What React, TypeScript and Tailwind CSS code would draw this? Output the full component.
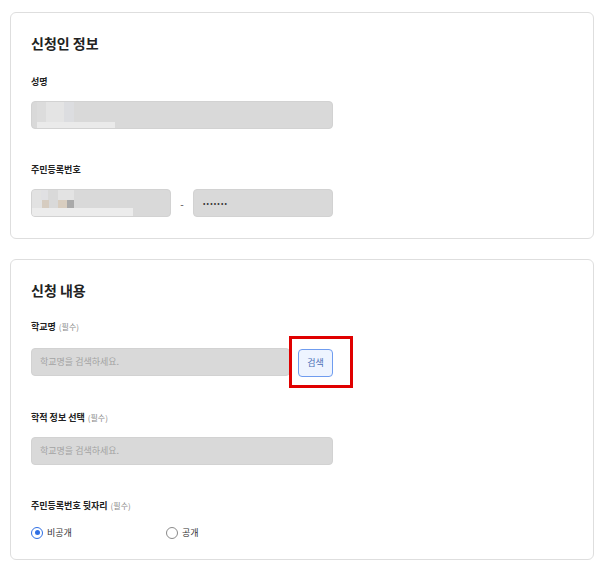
import React from "react";

const font = { fontFamily: '"Noto Sans CJK KR", "Noto Sans", sans-serif' };

const Label = ({ text, required }: { text: string; required?: boolean }) => (
  <div className="flex items-center h-[14px] leading-[14px]">
    <span className="text-[9px] font-bold text-[#222]">{text}</span>
    {required && (
      <span className="ml-[3px] text-[8px] text-[#8a8a8a]">(필수)</span>
    )}
  </div>
);

const Field = ({
  className,
  placeholder,
  children,
}: {
  className?: string;
  placeholder?: string;
  children?: React.ReactNode;
}) => (
  <div
    className={`relative h-[28px] rounded-[4px] bg-[#d9d9d9] border border-[#d2d2d2] flex items-center pl-[8px] overflow-hidden ${
      className ?? ""
    }`}
  >
    {placeholder && (
      <span className="text-[9px] text-[#a3a3a3]">{placeholder}</span>
    )}
    {children}
  </div>
);

const Radio = ({ label, checked }: { label: string; checked?: boolean }) => (
  <label className="flex items-center gap-[4px] h-[14px]">
    <span
      className={`w-[12px] h-[12px] rounded-full border flex items-center justify-center bg-white ${
        checked ? "border-[#2f6fe4]" : "border-[#8a8a8a]"
      }`}
    >
      {checked && <span className="w-[5px] h-[5px] rounded-full bg-[#2f6fe4]" />}
    </span>
    <span className="text-[9px] text-[#333]">{label}</span>
  </label>
);

const Card = ({ title, children, className }: { title: string; children: React.ReactNode; className?: string }) => (
  <section
    className={`w-[584px] rounded-[6px] border border-[#dedede] bg-white pl-[20px] pt-[21px] ${className ?? ""}`}
  >
    <h2 className="text-[14px] leading-[18px] font-bold text-[#222]">{title}</h2>
    {children}
  </section>
);

export default function App() {
  return (
    <div className="min-h-[566px] bg-white pl-[10px] pt-[12px]" style={font}>
      <Card title="신청인 정보" className="pb-[21px]">
        <div className="mt-[23px]">
          <Label text="성명" />
        </div>
        <Field className="mt-[12px] w-[302px]">
          <span className="absolute left-[5px] top-0 w-[9px] h-[20px] bg-[#dcdcdc]" />
          <span className="absolute left-[14px] top-0 w-[18px] h-[20px] bg-[#e4e4e4]" />
          <span className="absolute left-[32px] top-0 w-[10px] h-[20px] bg-[#dcdde0]" />
          <span className="absolute left-[5px] top-[20px] w-[78px] h-[8px] bg-[#eaeaea]" />
        </Field>

        <div className="mt-[34px]">
          <Label text="주민등록번호" />
        </div>
        <div className="mt-[12px] flex items-center w-[302px]">
          <Field className="w-[140px]">
            <span className="absolute left-0 top-0 w-[10px] h-[28px] bg-[#e2e2e2]" />
            <span className="absolute left-[9px] top-0 w-[7px] h-[10px] bg-[#e0e0e3]" />
            <span className="absolute left-[10px] top-[10px] w-[7px] h-[8px] bg-[#d6ccc0]" />
            <span className="absolute left-[26px] top-0 w-[16px] h-[10px] bg-[#e3e3e3]" />
            <span className="absolute left-[26px] top-[10px] w-[9px] h-[8px] bg-[#d8cdbf]" />
            <span className="absolute left-[35px] top-[10px] w-[7px] h-[8px] bg-[#a9a9a9]" />
            <span className="absolute left-0 top-[18px] w-[101px] h-[10px] bg-[#ececec]" />
          </Field>
          <span className="flex-1 text-center text-[10px] text-[#444]">-</span>
          <Field className="w-[140px] pl-[9px]">
            <span className="text-[7px] tracking-[1.2px] text-[#333]">•••••••</span>
          </Field>
        </div>
      </Card>

      <Card title="신청 내용" className="mt-[20px] pb-[19px]">
        <div className="mt-[21px]">
          <Label text="학교명" required />
        </div>
        <div className="mt-[13px] flex items-center gap-[8px]">
          <Field className="w-[259px]" placeholder="학교명을 검색하세요." />
          <div className="relative">
            <button className="w-[35px] h-[28px] rounded-[4px] border border-[#6f9cef] bg-[#eef4ff] text-[9px] text-[#4a6db5]">
              검색
            </button>
            <div className="absolute left-[-9px] top-[-11px] w-[64px] h-[52px] border-[3px] border-[#e00000]" />
          </div>
        </div>

        <div className="mt-[34px]">
          <Label text="학적 정보 선택" required />
        </div>
        <Field className="mt-[12px] w-[302px]" placeholder="학교명을 검색하세요." />

        <div className="mt-[34px]">
          <Label text="주민등록번호 뒷자리" required />
        </div>
        <div className="mt-[13px] flex items-center">
          <div className="w-[135px]">
            <Radio label="비공개" checked />
          </div>
          <Radio label="공개" />
        </div>
      </Card>
    </div>
  );
}
